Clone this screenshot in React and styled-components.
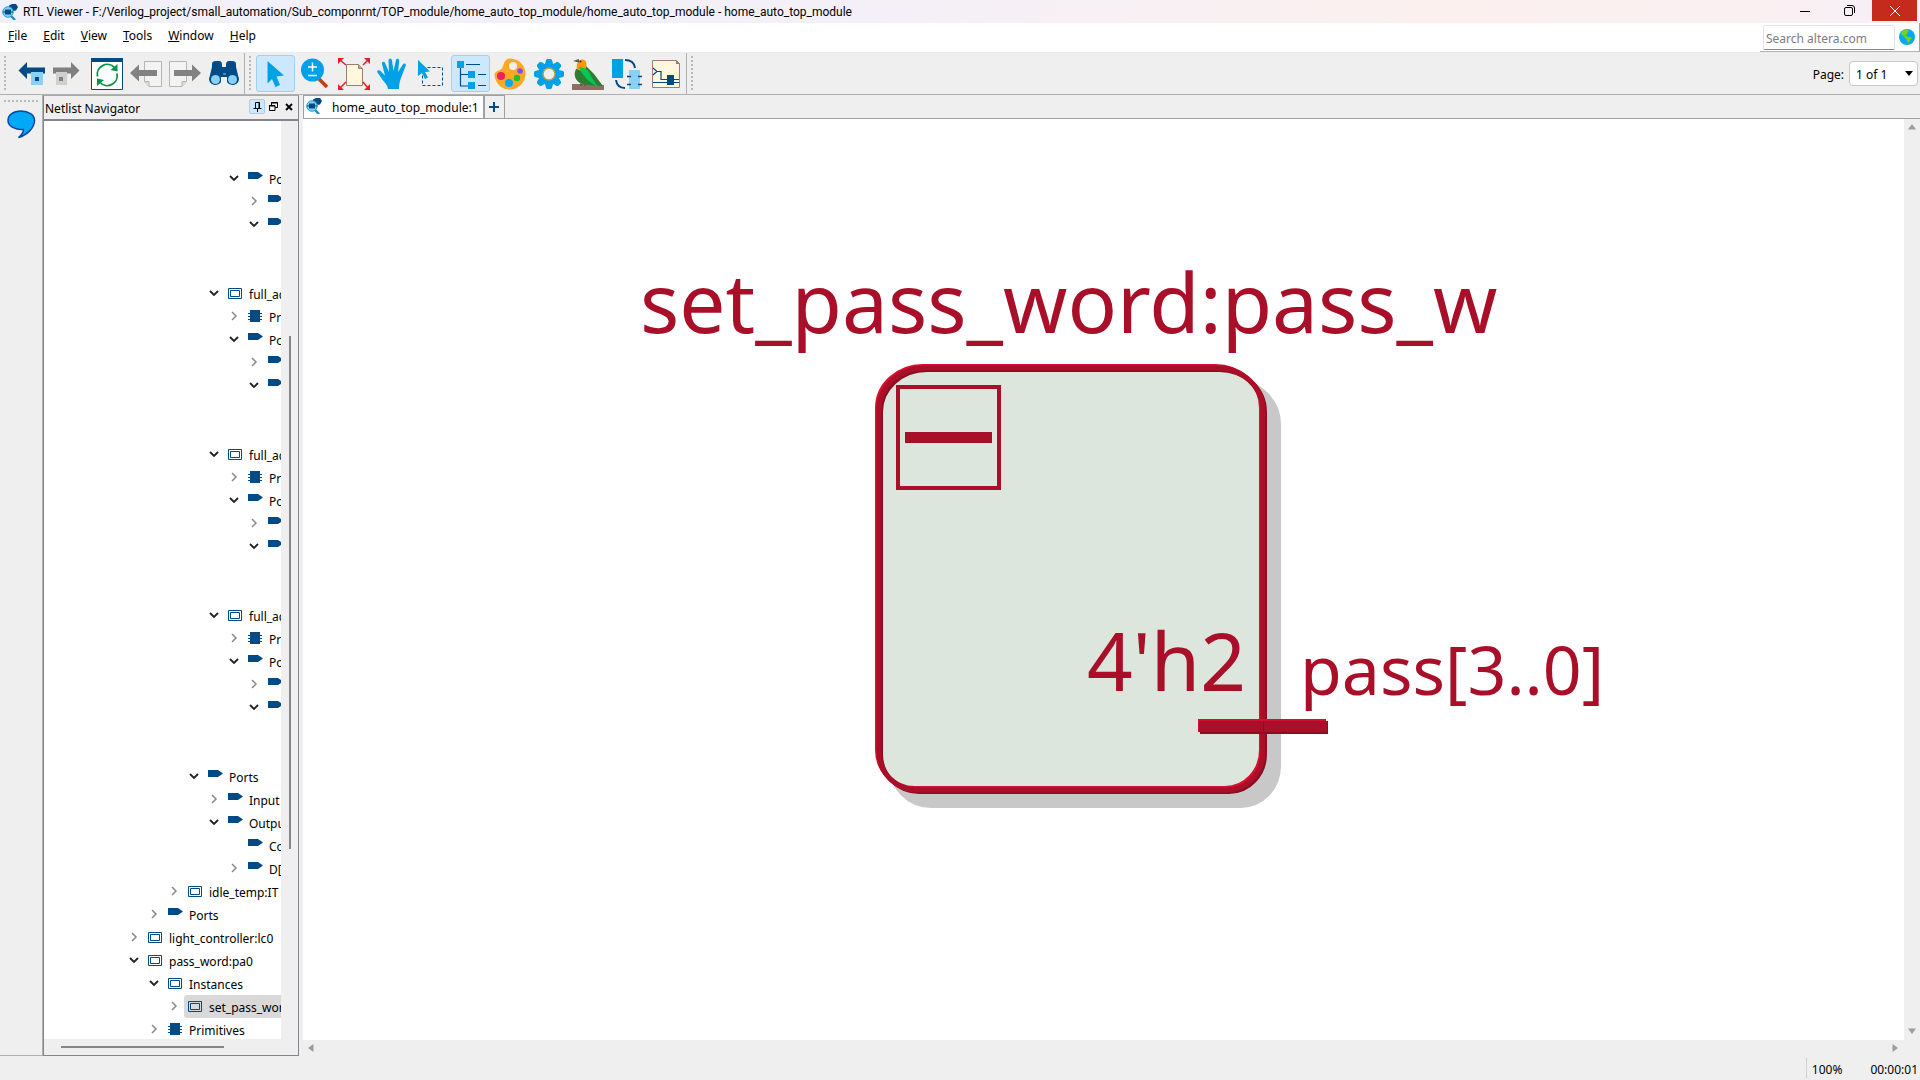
import React from "react";
import styled, { createGlobalStyle } from "styled-components";

const UI_FONT = '"Noto Sans", "Open Sans", sans-serif';
const NAVY = "#004a86";
const SKY = "#00a1e6";
const RED = "#a90f28";

const GlobalStyle = createGlobalStyle`
  *, *::before, *::after { box-sizing: border-box; }
  body { margin: 0; background: #efefef; color: #000; font: 12px/16px ${UI_FONT}; overflow: hidden; }
  button, input, select { font: inherit; color: inherit; }
  button { border: 0; background: none; padding: 0; cursor: default; }
  svg { display: block; flex: none; }
`;

const Window = styled.div`
  display: flex;
  flex-direction: column;
  height: 100vh;
  background: #efefef;
`;

/* Title bar */
const TitleBar = styled.header`
  display: flex;
  align-items: center;
  height: 23px;
  padding-left: 2px;
  background: linear-gradient(90deg, #f1f0f9 0%, #f4f0f8 45%, #fbf0ee 75%, #faf0f1 90%, #f7eff7 100%);
`;
const Title = styled.h1`
  flex: 1;
  margin: 0 0 0 5px;
  font: 400 12px/20px Roboto, "Noto Sans", sans-serif;
  white-space: nowrap;
`;
const CaptionButton = styled.button`
  display: flex;
  align-items: center;
  justify-content: center;
  align-self: flex-start;
  width: 45px;
  height: 21px;
  background: ${(p) => (p.$danger ? "#c42b1c" : "transparent")};
  margin-right: ${(p) => (p.$danger ? "3px" : "0")};
`;

/* Menu */
const MenuRow = styled.div`
  display: flex;
  justify-content: space-between;
  height: 30px;
  background: #fff;
  border-bottom: 1px solid #ececec;
`;
const MenuNav = styled.nav`
  display: flex;
  align-items: center;
  gap: 16px;
  padding: 0 8px 4px;
`;
const MenuButton = styled.button`
  line-height: 16px;
  &::first-letter { text-decoration: underline; }
`;
const SearchArea = styled.form`
  display: flex;
  align-items: center;
  gap: 4px;
  padding: 0 4px 0 3px;
  border-right: 1px solid #a0a0a0;
  border-bottom: 1px solid #b4b4b4;
`;
const SearchInput = styled.input`
  width: 132px;
  height: 25px;
  padding: 2px 2px 0;
  border: 1px solid #e4e4e4;
  border-bottom: 1px solid #858585;
  border-radius: 2px;
  background: #fff;
  outline: 0;
  &::placeholder { color: #7d7d7d; opacity: 1; }
`;

/* Toolbar */
const ToolBar = styled.div`
  display: flex;
  align-items: center;
  height: 42px;
  padding-left: 4px;
  border-bottom: 1px solid #b0b0b0;
`;
const Grip = styled.div`
  width: ${(p) => (p.$horizontal ? "35px" : "2px")};
  height: ${(p) => (p.$horizontal ? "2px" : "35px")};
  flex: none;
  background: repeating-linear-gradient(${(p) => (p.$horizontal ? "90deg" : "180deg")}, #b8b8b8 0 2px, transparent 2px 4px);
`;
const ToolGroup = styled.div`
  display: flex;
  align-items: center;
  align-self: stretch;
  padding-right: ${(p) => p.$end || 0}px;
  margin-right: 4px;
  border-right: 1px solid #b0b0b0;
`;
const ToolButton = styled.button`
  display: flex;
  align-items: center;
  justify-content: center;
  width: ${(p) => (p.$narrow ? "34px" : "39px")};
  height: 37px;
  border: 1px solid ${(p) => (p.$active ? "#99d1ff" : "transparent")};
  border-radius: 3px;
  background: ${(p) => (p.$active ? "#cce8ff" : "transparent")};
`;
const Spacer = styled.div`
  flex: ${(p) => (p.$w ? "none" : 1)};
  width: ${(p) => p.$w || 0}px;
`;
const PageLabel = styled.label`
  margin: 2px 5px 0 0;
`;
const SelectBox = styled.div`
  display: grid;
  align-items: center;
  margin-right: 2px;
  > * { grid-area: 1 / 1; }
  > svg { justify-self: end; margin-right: 5px; pointer-events: none; }
`;
const PageSelect = styled.select`
  appearance: none;
  width: 69px;
  height: 25px;
  padding: 2px 6px 0;
  border: 1px solid #c8c8c8;
  border-radius: 4px;
  background: #fff;
`;

/* Body */
const Body = styled.div`
  display: flex;
  flex: 1;
  min-height: 0;
`;
const SideStrip = styled.aside`
  display: flex;
  flex-direction: column;
  align-items: center;
  gap: 6px;
  width: 43px;
  padding-top: 5px;
  border-right: 1px solid #b0b0b0;
  border-bottom: 1px solid #b0b0b0;
`;
const Dock = styled.section`
  display: flex;
  flex-direction: column;
  width: 256px;
  border: 1px solid #84848f;
  border-top-color: #a8a8ae;
  margin-right: 4px;
`;
const DockHeader = styled.div`
  display: flex;
  align-items: center;
  height: 25px;
  padding: 0 1px;
  border-bottom: 2px solid #84848f;
`;
const DockTitle = styled.h2`
  flex: 1;
  margin: 3px 0 0;
  font: 400 12px/16px ${UI_FONT};
`;
const DockButton = styled.button`
  display: flex;
  align-items: center;
  justify-content: center;
  width: 16px;
  height: 15px;
  margin-bottom: 2px;
  border: 1px solid ${(p) => (p.$active ? "#99d1ff" : "transparent")};
  border-radius: 2px;
  background: ${(p) => (p.$active ? "#cce8ff" : "transparent")};
`;
const DockBody = styled.div`
  display: grid;
  grid-template: minmax(0, 1fr) 16px / minmax(0, 1fr) 17px;
  flex: 1;
  min-height: 0;
`;
const Tree = styled.ul`
  margin: 0;
  padding: 0;
  list-style: none;
  overflow: hidden;
  background: #fff;
`;
const TreeRow = styled.li`
  display: flex;
  align-items: center;
  height: 23px;
  padding-left: ${(p) => 80 + p.$level * 20}px;
  white-space: nowrap;
`;
const Twisty = styled.span`
  display: flex;
  flex: none;
  justify-content: center;
  width: 20px;
  padding-bottom: 2px;
`;
const TreeItem = styled.span`
  display: flex;
  align-items: center;
  flex: 1 0 auto;
  height: 23px;
  padding: 0 0 1px 4px;
  border-radius: 3px 0 0 3px;
  background: ${(p) => (p.$selected ? "#d9d9d9" : "transparent")};
`;
const IconSlot = styled.span`
  flex: none;
  width: 21px;
`;
const TreeText = styled.span`
  padding-top: 4px;
`;
const Track = styled.div`
  display: flex;
  padding: ${(p) => (p.$horizontal ? "7px 0 0 17px" : "215px 0 0 8px")};
`;
const Thumb = styled.div`
  width: ${(p) => (p.$horizontal ? "74%" : "2px")};
  height: ${(p) => (p.$horizontal ? "2px" : "73%")};
  background: #868686;
`;

/* Main view */
const View = styled.main`
  display: flex;
  flex-direction: column;
  flex: 1;
  min-width: 0;
`;
const TabBar = styled.div`
  display: flex;
  height: 24px;
  border-bottom: 1px solid #a0a0a0;
`;
const Tab = styled.button`
  display: flex;
  align-items: center;
  gap: 10px;
  padding: 0 4px 2px 2px;
  border: 1px solid #a0a0a0;
  border-width: 1px 1px 0 1px;
  background: #fff;
`;
const TabText = styled.span`
  padding-top: 4px;
`;
const AddTab = styled.button`
  display: flex;
  align-items: center;
  justify-content: center;
  width: 21px;
  border: 1px solid #a0a0a0;
  border-bottom: 0;
`;
const ViewBody = styled.div`
  display: grid;
  grid-template: minmax(0, 1fr) 16px / minmax(0, 1fr) 16px;
  flex: 1;
  min-height: 0;
`;
const Canvas = styled.div`
  min-width: 0;
  min-height: 0;
  background: #fff;
  > svg { width: 100%; height: 100%; }
`;
const ScrollEnds = styled.div`
  display: flex;
  flex-direction: ${(p) => (p.$horizontal ? "row" : "column")};
  align-items: center;
  justify-content: space-between;
  padding: ${(p) => (p.$horizontal ? "0 5px 0 4px" : "4px 0 5px")};
`;
const StatusBar = styled.footer`
  display: flex;
  align-items: center;
  justify-content: flex-end;
  height: 24px;
  padding-right: 2px;
`;
const Zoom = styled.span`
  padding: 4px 0 0 5px;
  border-left: 1px solid #d0d0d0;
`;
const Elapsed = styled.span`
  padding: 4px 0 0;
  margin-left: 28px;
`;

/* Icons */
const Svg = ({ s = 32, w, h, children, ...rest }) => (
  <svg width={w || s} height={h || s} viewBox={`0 0 ${w || s} ${h || s}`} aria-hidden="true" {...rest}>{children}</svg>
);

const AppIcon = () => (
  <Svg s={16}>
    <path d="M7 1.5 10 0h4l2 3-2 3.5-3 .5-4-2z" fill={NAVY} />
    <circle cx="6" cy="8" r="5.3" fill="#7fd0f0" stroke="#2a9fd0" strokeWidth="1" />
    <path d="M3 5.5h6v5H3z" fill={NAVY} />
    <path d="M1 8h10" stroke={NAVY} />
    <path d="m9 12 4 4" stroke="#1d8cc8" strokeWidth="2.4" />
  </Svg>
);
const BackIcon = () => (
  <Svg>
    <path d="M2.500 12.500 11 4v5.500h18v6H11V21z" fill={NAVY} />
    <path d="M15 14h12v13H15z" fill="#89d0f2" /><path d="M19 19h4v4h-4z" fill={NAVY} />
  </Svg>
);
const ForwardIcon = () => (
  <Svg>
    <path d="M29.500 12.500 21 4v5.500H3v6h18V21z" fill="#808080" />
    <path d="M6 14h11v13H6z" fill="#cfcfcf" /><path d="M9 19h4v4H9z" fill="#808080" />
  </Svg>
);
const RefreshIcon = () => (
  <Svg>
    <path d="M.5.5h31v31H.5z" fill="#fff" stroke={NAVY} /><path d="M0 0h32v4H0z" fill={NAVY} />
    <path d="M6.500 18.500a10 10 0 0 1 17-9M26 15.500a10 10 0 0 1-17 9" fill="none" stroke="#00964a" strokeWidth="1.800" />
    <path d="M26.500 6v7.500L19.500 12zM6 28v-7.500L13 22z" fill="#00964a" />
  </Svg>
);
const PrevPageIcon = () => (
  <Svg>
    <path d="M14.500 3.500h17v25H19l-4.500-5z" fill="#f3f3f3" stroke="#b5b5b5" /><path d="M14.500 23.500H19v5" fill="#ddd" stroke="#b5b5b5" />
    <path d="M0 15 9 6.500V12h18v6H9v5.500z" fill="#828282" />
  </Svg>
);
const NextPageIcon = () => (
  <Svg>
    <path d="M.5 3.500h17v20l-4.500 5H.5z" fill="#f3f3f3" stroke="#b5b5b5" /><path d="M17.500 23.500H13v5" fill="#ddd" stroke="#b5b5b5" />
    <path d="M32 15l-9-8.500V12H5v6h18v5.500z" fill="#828282" />
  </Svg>
);
const FindIcon = () => (
  <Svg>
    <path d="M1 21 4 9V6q0-3 4-3h3q3 0 3 4v2h4V7q0-4 3-4h3q4 0 4 3v3l3 12a6.500 6.500 0 0 1-12 3v-5h-6v5a6.500 6.500 0 0 1-12-3z" fill={NAVY} />
    <circle cx="7.500" cy="21.500" r="4.500" fill="#89d0f2" /><circle cx="24.500" cy="21.500" r="4.500" fill="#89d0f2" />
    <path d="M15 16h3" stroke="#89d0f2" />
  </Svg>
);
const PointerIcon = () => (
  <Svg><path d="M7.500 3 24 17.500l-7.500 1L20 27l-4.500 2-3.500-8-4.500 4.500z" fill={SKY} /></Svg>
);
const ZoomIcon = () => (
  <Svg>
    <path d="m20 21 8 8" stroke="#c1440e" strokeWidth="3.500" /><circle cx="13.500" cy="12" r="11.500" fill={SKY} />
    <path d="M13.500 4.500v9M9 9h9M9 17.500h9" stroke="#fff" strokeWidth="1.500" />
  </Svg>
);
const FitIcon = () => (
  <Svg>
    <path d="M8.500 6.500h12l4 4v17h-16z" fill="#fff8df" stroke="#9c7f70" /><path d="M20.500 6.500v4h4" fill="#c9aca0" stroke="#9c7f70" />
    <path d="m2 2 6 5M30 2l-5 5M2 30l6-6M30 30l-5-6" stroke="#ed1c24" strokeWidth="1.500" />
    <path d="M0 0h6L0 6zM32 0h-6l6 6zM0 32h6l-6-6zM32 32h-6l6-6z" fill="#ed1c24" />
  </Svg>
);
const HandIcon = () => (
  <Svg>
    <path d="M11 31c-.5-4-3-6-5-8.500L.5 14.500c-1-2 1.500-3 3-1.500L8 17.500 5 6c-.5-2.500 2.500-3 3.200-.8L12 14 11.500 2.500c0-2.800 3.200-2.800 3.500 0L16.500 13 19 2c.6-2.200 3.600-1.500 3.200.8L21 14l4.800-7.500c1.300-2 3.700-.8 2.900 1.300L24 20c-1.500 4-2 7-2 11z" fill={SKY} />
  </Svg>
);
const MarqueeIcon = () => (
  <Svg>
    <path d="M6.500 9.500h20v18h-20z" fill="none" stroke={NAVY} strokeDasharray="3 2" />
    <path d="M2 2v16l4-3 3 6 3-1.500-3-5.500 5-.5z" fill={SKY} />
  </Svg>
);
const HierarchyIcon = () => (
  <Svg>
    <path d="M5.500 9v19H17M5.500 16.500H17M11 6.500h14M23 16.500h8M23 27.500h8" fill="none" stroke={NAVY} strokeWidth="1.200" />
    <path d="M2 3h7v7H2zM13 13h7v7h-7zM13 24h7v7h-7z" fill={SKY} />
  </Svg>
);
const PaletteIcon = () => (
  <Svg>
    <path d="M17 .5C8 0 11 10 6 12 0 14 0 16 1 20c2 7 8 11.500 14 11.500 11 0 16.500-8 16.500-16S25 1 17 .5z" fill="#ffa726" />
    <circle cx="19" cy="8" r="4" fill="#efefef" /><circle cx="7" cy="18" r="4" fill="#e91e63" />
    <circle cx="15" cy="25" r="4" fill="#03a9f4" /><circle cx="23" cy="20" r="3.200" fill="#22c02c" /><circle cx="26" cy="13" r="2.800" fill="#7c4dff" />
  </Svg>
);
const GearIcon = () => (
  <Svg>
    {[0, 45, 90, 135].map((a) => (
      <path key={a} d="m13 2 1-1h4l1 1 1.500 6v16L19 30l-1 1h-4l-1-1-1.500-6V8z" fill={SKY} transform={`rotate(${a} 16 16)`} />
    ))}
    <circle cx="16" cy="16" r="10.500" fill={SKY} /><circle cx="16" cy="16" r="6" fill="#efefef" stroke="#c09a45" strokeWidth="1.500" />
  </Svg>
);
const BirdIcon = () => (
  <Svg>
    <path d="M0 26h12l5-1.500 5 2.500h10v5H0z" fill="#8d6e63" /><path d="M9 24v4M13 25v3" stroke="#5d4037" />
    <path d="M4 11 14 8l8 8 9 12-9-.5-9-1C6 26 0 19 4 11z" fill="#2e7d32" />
    <path d="M5 11C3 2 12-1 14 4c1 3 0 6-1 8-3 1-6 1-8-1z" fill="#ff9800" />
    <path d="m1 3 6-2v3.500z" fill="#455a64" /><circle cx="8.500" cy="3.500" r="1" fill="#222" />
    <path d="M7 9q9 0 13 11l6 9Q12 22 7 9z" fill="#00c853" />
  </Svg>
);
const SwapIcon = () => (
  <Svg>
    <path d="M1 1h11v19H1z" fill={SKY} /><path d="M18 12h11v19H18z" fill="#89d0f2" />
    <path d="M14 2q9 0 10 8M5 22q1 8 9 8" fill="none" stroke={NAVY} strokeWidth="2" />
    <path d="M16 18.500h4M16 26.500h4M27 18.500h4M27 26.500h4" stroke={NAVY} strokeWidth="1.500" />
  </Svg>
);
const SchematicIcon = () => (
  <Svg>
    <path d="M2.500 2.500h24l3 3v24h-27z" fill="#fff8df" stroke="#9c7f70" /><path d="M26 2v4h4z" fill="#9c7f70" />
    <path d="m3 10 4 3.500L3 17M7 13.500h4v8h8M3 24.500h26M24 21.500h5" fill="none" stroke={NAVY} strokeWidth="1.200" />
    <path d="M17 17h7v10h-7z" fill={NAVY} />
  </Svg>
);
const BubbleIcon = () => (
  <Svg w={30} h={32}>
    <path d="M15 3C7.500 3 2 7 2 12.500 2 18 8 21.500 17.500 21.500c0 3-2 5.500-5 8C21 27 28.500 20 28.500 12.500 28.500 7 22.500 3 15 3z" fill="#00a9f7" stroke="#0d47a1" strokeWidth="1.500" />
  </Svg>
);
const GlobeIcon = () => (
  <Svg s={16}>
    <circle cx="8" cy="8" r="8" fill="#03a9f4" />
    <path d="M3 1.800 8 .5l2 2-2 1 1 1.500-3 1 3 2 4 .5-2 3-2 3.500H9L8 11 5 7.500 2 5z" fill="#76d21e" />
  </Svg>
);

const Down = () => <Svg w={10} h={8}><path d="m1 2 4 4 4-4" fill="none" stroke="#222" strokeWidth="1.800" /></Svg>;
const Right = () => <Svg w={8} h={10}><path d="m2 1 4 4-4 4" fill="none" stroke="#888" strokeWidth="1.500" /></Svg>;
const PortIcon = () => <Svg w={15} h={12}><path d="M0 0h10l5 3.500L10 7H0z" fill={NAVY} /></Svg>;
const InstIcon = () => <Svg w={14} h={12} fill="none" stroke={NAVY}><path d="M.5 1.500h13v10H.5zM2.500 3.500h9v6h-9z" /></Svg>;
const PrimIcon = () => (
  <Svg w={14} h={12}><path d="M2 0h10v12H2zM0 3h14v1H0zM0 6h14v1H0zM0 9h14v1H0z" fill={NAVY} /></Svg>
);
const Arrow = ({ turn }) => (
  <Svg s={8}><path d="M4 1 8 6.500H0z" fill="#9c9c9c" transform={`rotate(${turn} 4 4)`} /></Svg>
);

const NODE_ICONS = { port: PortIcon, inst: InstIcon, prim: PrimIcon };

const adder = [
  [4, "open", "inst", "full_adder:FA"],
  [5, "closed", "prim", "Primitives"],
  [5, "open", "port", "Ports"],
  [6, "closed", "port", "Input"],
  [6, "open", "port", "Output"],
  null,
  null,
];
const rows = [
  null, null,
  [5, "open", "port", "Ports"],
  [6, "closed", "port", "Input"],
  [6, "open", "port", "Output"],
  null, null,
  ...adder, ...adder, ...adder,
  [3, "open", "port", "Ports"],
  [4, "closed", "port", "Input"],
  [4, "open", "port", "Output"],
  [5, "", "port", "Cout"],
  [5, "closed", "port", "D[3..0]"],
  [2, "closed", "inst", "idle_temp:IT"],
  [1, "closed", "port", "Ports"],
  [0, "closed", "inst", "light_controller:lc0"],
  [0, "open", "inst", "pass_word:pa0"],
  [1, "open", "inst", "Instances"],
  [2, "closed", "inst", "set_pass_word:pass_w", true],
  [1, "closed", "prim", "Primitives"],
];

const leftTools = [
  ["Previous page", PrevPageIcon], ["Next page", NextPageIcon], ["Find", FindIcon],
];
const viewTools = [
  ["Select", PointerIcon, true], ["Zoom", ZoomIcon], ["Fit in window", FitIcon], ["Pan", HandIcon],
  ["Area select", MarqueeIcon], ["Netlist navigator", HierarchyIcon, true], ["Colors", PaletteIcon],
  ["Settings", GearIcon], ["Bird's eye view", BirdIcon], ["Swap", SwapIcon], ["Schematic", SchematicIcon],
];

const OUTLINE = "M925 368H1217A46 42 0 0 1 1263 410V752A36 38 0 0 1 1227 790H917A38 38 0 0 1 879 752V410A46 42 0 0 1 925 368Z";

const Diagram = () => (
  <svg viewBox="303 119 1601 921" role="img" aria-label="set_pass_word block" fontFamily={UI_FONT}>
    <path d={OUTLINE} fill="#c8c8c8" stroke="#c8c8c8" strokeWidth="8" transform="translate(14 14)" />
    <path d={OUTLINE} fill="#dce6dd" />
    <g fill="none" strokeWidth="4">
      <path d={OUTLINE} stroke="#d5102f" transform="translate(-2 -2)" />
      <path d={OUTLINE} stroke="#8b0d20" transform="translate(2 2)" />
      <path d={OUTLINE} stroke={RED} strokeWidth="5" />
      <path d="M898 387h101v101H898z" stroke={RED} />
    </g>
    <path d="M905 432h87v11h-87z" fill={RED} />
    <path d="M1198 719h128v13h-128z" fill="#d5102f" />
    <path d="M1200 721h128v13h-128z" fill="#8b0d20" />
    <path d="M1199 721h128v11h-128z" fill={RED} />
    <path d="M1263.500 721v11" stroke="#8b0d20" />
    <g fill={RED}>
      <text x="640" y="333" fontSize="82">set_pass_word:pass_w</text>
      <text x="1087" y="691" fontSize="80">4'h2</text>
      <text x="1300" y="695" fontSize="68">pass[3..0]</text>
    </g>
  </svg>
);

export default function App() {
  return (
    <Window>
      <GlobalStyle />
      <TitleBar>
        <AppIcon />
        <Title>RTL Viewer - F:/Verilog_project/small_automation/Sub_componrnt/TOP_module/home_auto_top_module/home_auto_top_module - home_auto_top_module</Title>
        <CaptionButton aria-label="Minimize"><Svg s={10}><path d="M0 5.500h10" stroke="#000" /></Svg></CaptionButton>
        <CaptionButton aria-label="Restore">
          <Svg s={11}><rect x=".5" y="2.500" width="8" height="8" rx="1.500" fill="none" stroke="#000" /><path d="M3 .5h5a2.500 2.500 0 0 1 2.500 2.500v5" fill="none" stroke="#000" /></Svg>
        </CaptionButton>
        <CaptionButton $danger aria-label="Close"><Svg s={10}><path d="m0 0 10 10M10 0 0 10" stroke="#fff" /></Svg></CaptionButton>
      </TitleBar>

      <MenuRow>
        <MenuNav aria-label="Main menu">
          {["File", "Edit", "View", "Tools", "Window", "Help"].map((m) => <MenuButton key={m}>{m}</MenuButton>)}
        </MenuNav>
        <SearchArea>
          <SearchInput aria-label="Search altera.com" placeholder="Search altera.com" />
          <GlobeIcon />
        </SearchArea>
      </MenuRow>

      <ToolBar>
        <Grip />
        <ToolGroup $end={1}>
          <Spacer $w={9} />
          <ToolButton $narrow aria-label="Back"><BackIcon /></ToolButton>
          <ToolButton $narrow aria-label="Forward"><ForwardIcon /></ToolButton>
          <Spacer $w={4} />
          <ToolButton aria-label="Refresh"><RefreshIcon /></ToolButton>
          {leftTools.map(([n, I]) => <ToolButton key={n} aria-label={n}><I /></ToolButton>)}
        </ToolGroup>
        <Grip />
        <Spacer $w={5} />
        <ToolGroup $end={1}>
          {viewTools.map(([n, I, a]) => <ToolButton key={n} aria-label={n} $active={a}><I /></ToolButton>)}
        </ToolGroup>
        <Grip />
        <Spacer />
        <PageLabel htmlFor="page">Page:</PageLabel>
        <SelectBox>
          <PageSelect id="page" defaultValue="1"><option value="1">1 of 1</option></PageSelect>
          <Svg w={8} h={8}><path d="M0 1h8L4 6z" fill="#000" /></Svg>
        </SelectBox>
      </ToolBar>

      <Body>
        <SideStrip>
          <Grip $horizontal />
          <button aria-label="Messages"><BubbleIcon /></button>
        </SideStrip>

        <Dock>
          <DockHeader>
            <DockTitle>Netlist Navigator</DockTitle>
            <DockButton $active aria-label="Pin"><Svg s={11}><path d="M3.500 7V1.500h4V7M7 1v6M1.500 7.500h8M5.500 8v3" fill="none" stroke="#000" /></Svg></DockButton>
            <DockButton aria-label="Float"><Svg s={9}><path d="M2.500 3V.5h6v5H6M0 3.500h6v5H.5v-5M2 1h7M0 4h6" fill="none" stroke="#000" /></Svg></DockButton>
            <DockButton aria-label="Close panel"><Svg s={8}><path d="m1 1 6 6M7 1 1 7" stroke="#000" strokeWidth="1.800" /></Svg></DockButton>
          </DockHeader>
          <DockBody>
            <Tree>
              {rows.map((r, i) => {
                if (!r) return <TreeRow key={i} $level={0} />;
                const [level, state, kind, label, selected] = r;
                const Icon = NODE_ICONS[kind];
                return (
                  <TreeRow key={i} $level={level}>
                    <Twisty>{state === "open" ? <Down /> : state === "closed" ? <Right /> : null}</Twisty>
                    <TreeItem $selected={selected}><IconSlot><Icon /></IconSlot><TreeText>{label}</TreeText></TreeItem>
                  </TreeRow>
                );
              })}
            </Tree>
            <Track><Thumb /></Track>
            <Track $horizontal><Thumb $horizontal /></Track>
          </DockBody>
        </Dock>

        <View>
          <TabBar>
            <Tab><AppIcon /><TabText>home_auto_top_module:1</TabText></Tab>
            <AddTab aria-label="New tab"><Svg s={10}><path d="M5 0v10M0 5h10" stroke={NAVY} strokeWidth="2" /></Svg></AddTab>
          </TabBar>
          <ViewBody>
            <Canvas><Diagram /></Canvas>
            <ScrollEnds><Arrow turn={0} /><Arrow turn={180} /></ScrollEnds>
            <ScrollEnds $horizontal><Arrow turn={270} /><Arrow turn={90} /></ScrollEnds>
          </ViewBody>
        </View>
      </Body>

      <StatusBar><Zoom>100%</Zoom><Elapsed>00:00:01</Elapsed></StatusBar>
    </Window>
  );
}
